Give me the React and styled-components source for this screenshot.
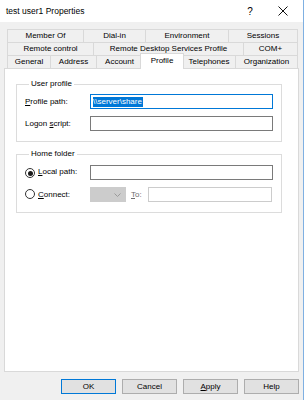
import React from 'react';
import styled, { createGlobalStyle } from 'styled-components';

const Global = createGlobalStyle`
  html, body { margin: 0; padding: 0; background: #ffffff; }
  body { font-family: "Liberation Sans", Arial, sans-serif; font-size: 8px; color: #000; }
  #root { width: 307px; height: 400px; }
`;

const Window = styled.div`
  width: 304px;
  height: 400px;
  box-sizing: border-box;
  border-right: 1px solid #7fb0e2;
  background: #f0f0f0;
  display: flex;
  flex-direction: column;
`;

const TitleBar = styled.div`
  height: 22px;
  background: #ffffff;
  display: flex;
  align-items: center;
  padding-left: 6px;
  flex: none;
`;

const Title = styled.span`
  font-size: 8.5px;
  line-height: 10px;
  flex: 1;
`;

const HelpGlyph = styled.span`
  font-size: 10px;
  width: 10px;
  text-align: center;
  margin-right: 23px;
`;

const CloseBox = styled.span`
  display: flex;
  width: 10px;
  height: 10px;
  margin-right: 15px;
`;

const TabStack = styled.div`
  margin: 7px 0 0 7px;
  display: flex;
  flex-direction: column;
  flex: none;
`;

const TabRow = styled.div`
  display: flex;
  height: 13px;
  align-items: flex-end;
`;

const Tab = styled.div`
  position: relative;
  box-sizing: border-box;
  width: ${(p) => p.$w}px;
  height: 13px;
  flex: none;
  border: 1px solid #d9d9d9;
  border-bottom: none;
  border-right: ${(p) => (p.$last ? '1px solid #d9d9d9' : 'none')};
  background: #f0f0f0;
  display: flex;
  align-items: center;
  justify-content: center;
  line-height: 10px;
  white-space: nowrap;
`;

const ActiveTab = styled(Tab)`
  z-index: 1;
  width: ${(p) => p.$w + 4}px;
  height: 16px;
  margin: 0 -2px -1px -2px;
  border-right: 1px solid #d9d9d9;
  background: #ffffff;
  align-items: flex-start;
  padding-top: 2px;
`;

const Panel = styled.div`
  margin-left: 4px;
  width: 295px;
  height: 304px;
  box-sizing: border-box;
  background: #ffffff;
  border: 1px solid #d9d9d9;
  padding: 10px 11px 0 11px;
  display: flex;
  flex-direction: column;
  flex: none;
`;

const Group = styled.fieldset`
  margin: ${(p) => (p.$first ? 0 : 7)}px 0 0 0;
  width: 266px;
  box-sizing: border-box;
  border: 1px solid #dcdcdc;
  padding: ${(p) => p.$pt}px 8px 10px 8px;
  min-width: 0;
  display: flex;
  flex-direction: column;
  gap: 7px;
`;

const Legend = styled.legend`
  padding: 0 2px;
  margin-left: 4px;
  line-height: 10px;
  font-size: 8px;
`;

const FieldRow = styled.div`
  display: flex;
  align-items: center;
  height: 15px;
`;

const FieldLabel = styled.span`
  width: 65px;
  flex: none;
  display: block;
  line-height: 10px;
  white-space: nowrap;
`;

const U = styled.span`
  text-decoration: underline;
  text-underline-offset: 1px;
`;

const TextBox = styled.div`
  box-sizing: border-box;
  width: ${(p) => p.$w}px;
  height: 15px;
  flex: none;
  border: 1px solid ${(p) => (p.$focus ? '#0078d7' : p.$disabled ? '#cccccc' : '#7a7a7a')};
  background: #ffffff;
  display: flex;
  align-items: center;
  padding-left: 2px;
`;

const Selection = styled.span`
  background: #0078d7;
  color: #ffffff;
  line-height: 10px;
  padding: 0 1px 0 0;
`;

const Radio = styled.span`
  box-sizing: border-box;
  width: 10px;
  height: 10px;
  border-radius: 50%;
  border: 1px solid #333333;
  margin-right: 3px;
  display: inline-flex;
  vertical-align: -2px;
  align-items: center;
  justify-content: center;
  &::after {
    content: '';
    display: ${(p) => (p.$checked ? 'block' : 'none')};
    width: 5px;
    height: 5px;
    border-radius: 50%;
    background: #1a1a1a;
  }
`;

const Combo = styled.div`
  box-sizing: border-box;
  width: 36px;
  height: 15px;
  flex: none;
  background: #cccccc;
  border: 1px solid #cccccc;
  display: flex;
  align-items: center;
  justify-content: flex-end;
  padding-right: 4px;
`;

const DisabledLabel = styled.span`
  color: #6d6d6d;
  margin: 0 6px 0 5px;
  line-height: 10px;
  width: 11px;
  flex: none;
`;

const ButtonBar = styled.div`
  display: flex;
  justify-content: flex-end;
  gap: 6px;
  margin-top: 7px;
  padding-right: 4px;
  flex: none;
`;

const Button = styled.div`
  box-sizing: border-box;
  width: 55px;
  height: 15px;
  background: #e1e1e1;
  border: 1px solid ${(p) => (p.$default ? '#0078d7' : '#adadad')};
  display: flex;
  align-items: center;
  justify-content: center;
  line-height: 10px;
`;

const rows = [
  [
    { t: 'Member Of', w: 76 },
    { t: 'Dial-in', w: 62 },
    { t: 'Environment', w: 83 },
    { t: 'Sessions', w: 70 },
  ],
  [
    { t: 'Remote control', w: 86 },
    { t: 'Remote Desktop Services Profile', w: 150 },
    { t: 'COM+', w: 55 },
  ],
  [
    { t: 'General', w: 43 },
    { t: 'Address', w: 46 },
    { t: 'Account', w: 46 },
    { t: 'Profile', w: 40, active: true },
    { t: 'Telephones', w: 53 },
    { t: 'Organization', w: 63 },
  ],
];

export default function App() {
  return (
    <>
      <Global />
      <Window>
        <TitleBar>
          <Title>test user1 Properties</Title>
          <HelpGlyph>?</HelpGlyph>
          <CloseBox>
            <svg width="10" height="10" viewBox="0 0 10 10">
              <path d="M0.5 0.5 L9.5 9.5 M9.5 0.5 L0.5 9.5" stroke="#111" strokeWidth="1" fill="none" />
            </svg>
          </CloseBox>
        </TitleBar>

        <TabStack>
          {rows.map((row, i) => (
            <TabRow key={i}>
              {row.map((tab, j) =>
                tab.active ? (
                  <ActiveTab key={tab.t} $w={tab.w}>{tab.t}</ActiveTab>
                ) : (
                  <Tab key={tab.t} $w={tab.w} $last={j === row.length - 1}>{tab.t}</Tab>
                )
              )}
            </TabRow>
          ))}
        </TabStack>

        <Panel>
          <Group $first $pt={5}>
            <Legend>User profile</Legend>
            <FieldRow>
              <FieldLabel><U>P</U>rofile path:</FieldLabel>
              <TextBox $w={183} $focus>
                <Selection>\\server\share</Selection>
              </TextBox>
            </FieldRow>
            <FieldRow>
              <FieldLabel>Logon <U>s</U>cript:</FieldLabel>
              <TextBox $w={183} />
            </FieldRow>
          </Group>

          <Group $pt={6}>
            <Legend>Home folder</Legend>
            <FieldRow>
              <FieldLabel><Radio $checked /><U>L</U>ocal path:</FieldLabel>
              <TextBox $w={183} />
            </FieldRow>
            <FieldRow>
              <FieldLabel><Radio /><U>C</U>onnect:</FieldLabel>
              <Combo>
                <svg width="7" height="4" viewBox="0 0 7 4">
                  <path d="M0.5 0.5 L3.5 3.5 L6.5 0.5" stroke="#9a9a9a" strokeWidth="1" fill="none" />
                </svg>
              </Combo>
              <DisabledLabel><U>T</U>o:</DisabledLabel>
              <TextBox $w={124} $disabled />
            </FieldRow>
          </Group>
        </Panel>

        <ButtonBar>
          <Button $default>OK</Button>
          <Button>Cancel</Button>
          <Button><U>A</U>pply</Button>
          <Button>Help</Button>
        </ButtonBar>
      </Window>
    </>
  );
}
